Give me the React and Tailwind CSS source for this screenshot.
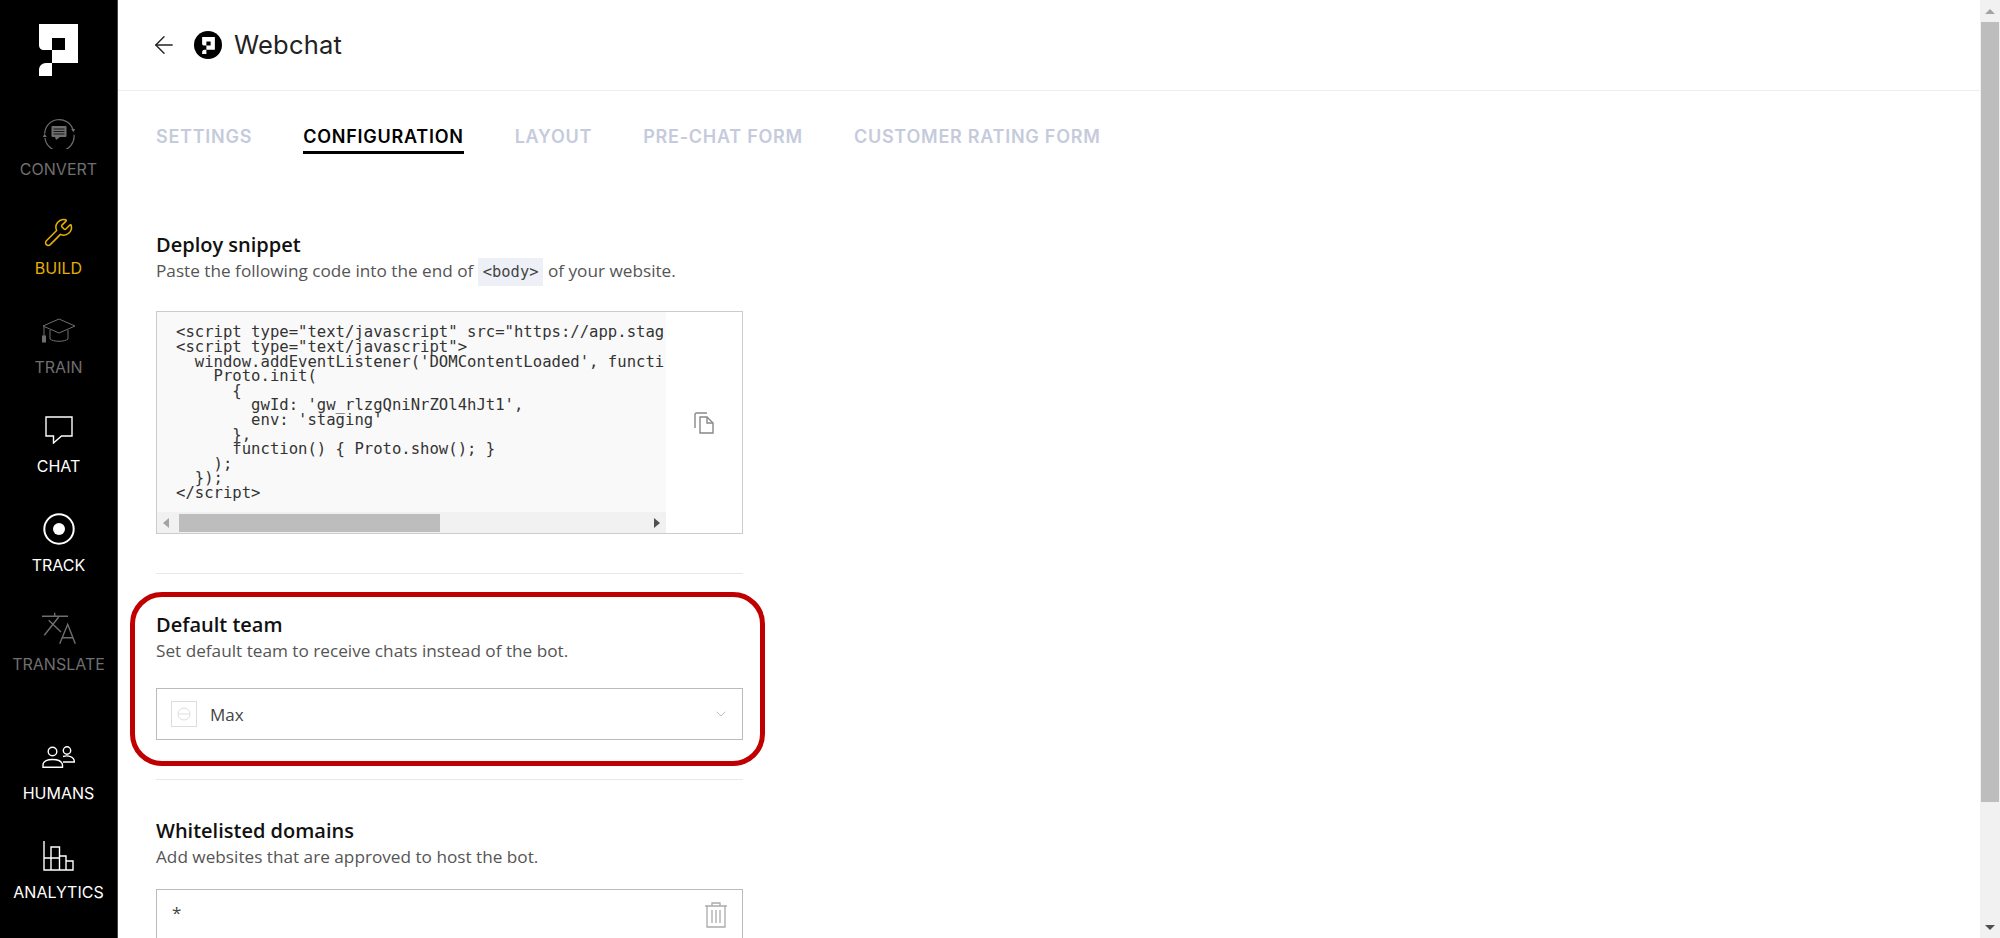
import React from 'react';
import { ArrowLeft, ChevronDown, Wrench } from 'lucide-react';

const CODE = `<script type="text/javascript" src="https://app.staging.pro.ai/webchat.js"></script>
<script type="text/javascript">
  window.addEventListener('DOMContentLoaded', function() {
    Proto.init(
      {
        gwId: 'gw_rlzgQniNrZOl4hJt1',
        env: 'staging'
      },
      function() { Proto.show(); }
    );
  });
</script>`;

const Logo = ({ className, fill = '#fff' }) => (
  <svg viewBox="0 0 39 52" className={className} fill={fill}>
    <path fillRule="evenodd" d="M0 0H39V39H13V26H5C2 26 0 24 0 21ZM13 14V26H26V14Z" />
    <path d="M13 39V52H0V46C0 42 3 39 7 39Z" />
  </svg>
);

const ConvertIcon = () => (
  <svg viewBox="0 0 34 32" className="w-[34px] h-[32px]" fill="none" stroke="currentColor" strokeWidth="1.2">
    <path d="M2.7 16.7A14.5 14.5 0 0 1 31 12.7" />
    <path d="M32 17.7A14.5 14.5 0 0 1 3 21" />
    <path d="M29.3 12h4l-2 3.3zM0.7 20h4l-2-3.3z" fill="currentColor" stroke="none" />
    <rect x="9.5" y="9" width="15" height="11" rx="1" fill="currentColor" stroke="none" />
    <path d="M13 20h5l-4 3z" fill="currentColor" stroke="none" />
    <path d="M11.5 12h11M11.5 14.5h11M11.5 17h11" stroke="#000" strokeWidth="0.8" />
  </svg>
);

const TrainIcon = () => (
  <svg viewBox="0 0 34 26" className="w-[34px] h-[26px]" fill="none" stroke="currentColor" strokeWidth="1">
    <path d="M1 8L17 1l16 7-16 7z" />
    <path d="M8 12v9c3 3 15 3 18 0v-9" />
    <path d="M2 9v9" />
    <rect x="0.5" y="18" width="3" height="6" fill="currentColor" />
  </svg>
);

const ChatIcon = () => (
  <svg viewBox="0 0 28 28" className="w-[28px] h-[28px]" fill="none" stroke="currentColor" strokeWidth="1.4">
    <path d="M1 1H27V20H16.5L8.5 27V20H1Z" />
  </svg>
);

const TrackIcon = () => (
  <svg viewBox="0 0 32 32" className="w-[32px] h-[32px]">
    <circle cx="16" cy="16" r="14.7" fill="none" stroke="currentColor" strokeWidth="2" />
    <circle cx="16" cy="16" r="6" fill="currentColor" />
  </svg>
);

const TranslateIcon = () => (
  <svg viewBox="0 0 34 32" className="w-[34px] h-[32px]" fill="none" stroke="currentColor" strokeWidth="1.4">
    <path d="M0 4.3H26M12.7 0.7V4.3M16.7 5L2.3 23.3M6.7 8.3L19 20" />
    <path d="M17.7 31.7L25.7 12.3L33.3 31.7M20 25.7H31" />
  </svg>
);

const HumansIcon = () => (
  <svg viewBox="0 0 33 22" className="w-[33px] h-[22px]" fill="none" stroke="currentColor" strokeWidth="1.4">
    <circle cx="10.5" cy="5.5" r="4.3" />
    <path d="M1 21.3V19C1 15 6 13.5 10.5 13.5S20 15 20.5 19V21.3Z" />
    <circle cx="25" cy="4.5" r="3.7" />
    <path d="M21 10.5C26 9 32.3 10.5 32.3 15.5V16H21" />
  </svg>
);

const AnalyticsIcon = () => (
  <svg viewBox="0 0 31 30" className="w-[31px] h-[30px]" fill="none" stroke="currentColor" strokeWidth="1.4">
    <path d="M1 0V29H30V20H23V29M1 17H16.5M8 29V6H16.5V29M16.5 15H23V29" />
  </svg>
);

const NAV_TOP = [
  { label: 'CONVERT', color: 'text-[#6f6f6f]', icon: <ConvertIcon /> },
  { label: 'BUILD', color: 'text-[#e6b000]', icon: <Wrench className="w-[31px] h-[31px]" strokeWidth={1.2} /> },
  { label: 'TRAIN', color: 'text-[#6f6f6f]', icon: <TrainIcon /> },
  { label: 'CHAT', color: 'text-white', icon: <ChatIcon /> },
  { label: 'TRACK', color: 'text-white', icon: <TrackIcon /> },
  { label: 'TRANSLATE', color: 'text-[#6f6f6f]', icon: <TranslateIcon /> },
];

const NAV_BOTTOM = [
  { label: 'HUMANS', color: 'text-white', icon: <HumansIcon /> },
  { label: 'ANALYTICS', color: 'text-white', icon: <AnalyticsIcon /> },
];

const NavItem = ({ item }) => (
  <div className={`h-[99px] flex flex-col items-center ${item.color}`}>
    <div className="h-[66px] flex items-center justify-center">{item.icon}</div>
    <span className="-mt-[6px] text-[16px] leading-[18px] font-normal whitespace-nowrap font-['Inter',sans-serif]">{item.label}</span>
  </div>
);

const Section = ({ title, children }) => (
  <div>
    <h3 className="text-[20px] leading-[24px] font-semibold text-[#111]">{title}</h3>
    <p className="text-[17.2px] leading-[28px] text-[#555]">{children}</p>
  </div>
);

const TABS = [
  { label: 'SETTINGS' },
  { label: 'CONFIGURATION', active: true },
  { label: 'LAYOUT' },
  { label: 'PRE-CHAT FORM' },
  { label: 'CUSTOMER RATING FORM' },
];

export default function App() {
  return (
    <div className="flex h-[938px] w-[2000px] overflow-hidden bg-white font-['Open_Sans',sans-serif]">
      {/* Sidebar */}
      <aside className="w-[118px] shrink-0 bg-black border-r border-[#444]">
        <div className="h-[100px] pt-[24px] pl-[39px]">
          <Logo className="w-[39px] h-[52px]" />
        </div>
        {NAV_TOP.map((item) => <NavItem key={item.label} item={item} />)}
        <div className="h-[30px]" />
        {NAV_BOTTOM.map((item) => <NavItem key={item.label} item={item} />)}
      </aside>

      {/* Main */}
      <main className="flex-1 min-w-0 overflow-hidden">
        <header className="h-[91px] border-b border-[#eee] pl-[32px] flex items-center gap-[16px]">
          <ArrowLeft className="w-[28px] h-[28px] text-[#222]" strokeWidth={1.2} />
          <div className="flex items-center gap-[12px]">
            <div className="w-[28px] h-[28px] rounded-full bg-black flex items-center justify-center">
              <Logo className="w-[13px] h-[17px]" />
            </div>
            <h1 className="text-[25.5px] leading-[30px] font-normal tracking-[0.2px] text-[#222] font-['Inter',sans-serif]">Webchat</h1>
          </div>
        </header>

        <div className="pl-[38px]">
          <nav className="flex gap-[51px] pt-[32px] h-[142px]">
            {TABS.map((tab) => (
              <div
                key={tab.label}
                className={`h-[31px] text-[18px] leading-[27px] font-semibold tracking-[0.75px] font-['Inter',sans-serif] ${tab.active ? 'text-black border-b-[3px] border-black' : 'text-[#c5cbdc]'}`}
              >
                {tab.label}
              </div>
            ))}
          </nav>

          <div className="w-[587px] relative">
            <Section title="Deploy snippet">
              Paste the following code into the end of{' '}
              <code className="inline-block bg-[#edf1f7] px-[5px] h-[28px] leading-[28px] text-[15.4px] font-['DejaVu_Sans_Mono',monospace] text-[#444] align-middle">&lt;body&gt;</code>{' '}
              of your website.
            </Section>

            {/* Code box */}
            <div className="mt-[25px] h-[223px] border border-[#ccc] flex">
              <div className="w-[509px] flex flex-col bg-[#f9f9f9]">
                <pre className="flex-1 overflow-hidden ml-[19px] w-[489px] pt-[13px] text-[15.6px] leading-[14.6px] text-[#333] font-['DejaVu_Sans_Mono',monospace]">{CODE}</pre>
                <div className="h-[21px] bg-[#f1f1f1] flex items-center justify-between px-[6px]">
                  <div className="w-0 h-0 border-y-[5px] border-y-transparent border-r-[6px] border-r-[#a3a3a3]" />
                  <div className="w-[261px] h-[18px] bg-[#bdbdbd] absolute left-[23px]" />
                  <div className="w-0 h-0 border-y-[5px] border-y-transparent border-l-[6px] border-l-[#505050]" />
                </div>
              </div>
              <div className="flex-1 flex items-center justify-center">
                <svg viewBox="0 0 20 22" className="w-[20px] h-[22px]" fill="none" stroke="#888" strokeWidth="1.4">
                  <path d="M13 1H2.5C1.5 1 1 1.5 1 2.5V16" />
                  <path d="M6 5H13L19 11V21H6Z" />
                  <path d="M13 5V11H19" />
                </svg>
              </div>
            </div>

            <div className="mt-[39px] border-t border-[#e8e8e8]" />

            <div className="pt-[39px]">
              <Section title="Default team">Set default team to receive chats instead of the bot.</Section>
              <div className="mt-[23px] h-[52px] border border-[#bbb] flex items-center pl-[14px] pr-[13px]">
                <div className="w-[26px] h-[26px] border border-[#ddd] flex items-center justify-center">
                  <svg viewBox="0 0 14 14" className="w-[14px] h-[14px]" fill="none" stroke="#ddd" strokeWidth="1">
                    <circle cx="7" cy="7" r="6" />
                    <path d="M1.5 7h11" />
                  </svg>
                </div>
                <span className="ml-[13px] text-[17px] text-[#444] flex-1">Max</span>
                <ChevronDown className="w-[16px] h-[16px] text-[#bbb]" strokeWidth={1.4} />
              </div>
            </div>

            <div className="mt-[39px] border-t border-[#e8e8e8]" />

            <div className="pt-[39px]">
              <Section title="Whitelisted domains">Add websites that are approved to host the bot.</Section>
              <div className="mt-[18px] h-[80px] border border-[#bbb] flex justify-between pl-[15px] pr-[15px] pt-[12px]">
                <span className="text-[17px] leading-[22px] text-[#444]">*</span>
                <svg viewBox="0 0 22 26" className="w-[22px] h-[26px]" fill="none" stroke="#aaa" strokeWidth="1.3">
                  <path d="M0 4H22M7 4V1H15V4M2 4V25H20V4M7 8V21M11 8V21M15 8V21" />
                </svg>
              </div>
            </div>

            {/* Highlight drawn over the section */}
            <div className="absolute left-[-26px] top-[359px] w-[635px] h-[174px] border-[5px] border-[#c00000] rounded-[32px] pointer-events-none" />
          </div>
        </div>
      </main>

      {/* Window scrollbar */}
      <div className="w-[20px] shrink-0 bg-[#f1f1f1] flex flex-col items-center">
        <div className="h-[22px] flex items-center justify-center">
          <div className="w-0 h-0 border-x-[5px] border-x-transparent border-b-[5px] border-b-[#a3a3a3]" />
        </div>
        <div className="w-[18px] h-[780px] bg-[#bdbdbd]" />
        <div className="flex-1" />
        <div className="h-[22px] flex items-center justify-center">
          <div className="w-0 h-0 border-x-[5px] border-x-transparent border-t-[5px] border-t-[#505050]" />
        </div>
      </div>
    </div>
  );
}
